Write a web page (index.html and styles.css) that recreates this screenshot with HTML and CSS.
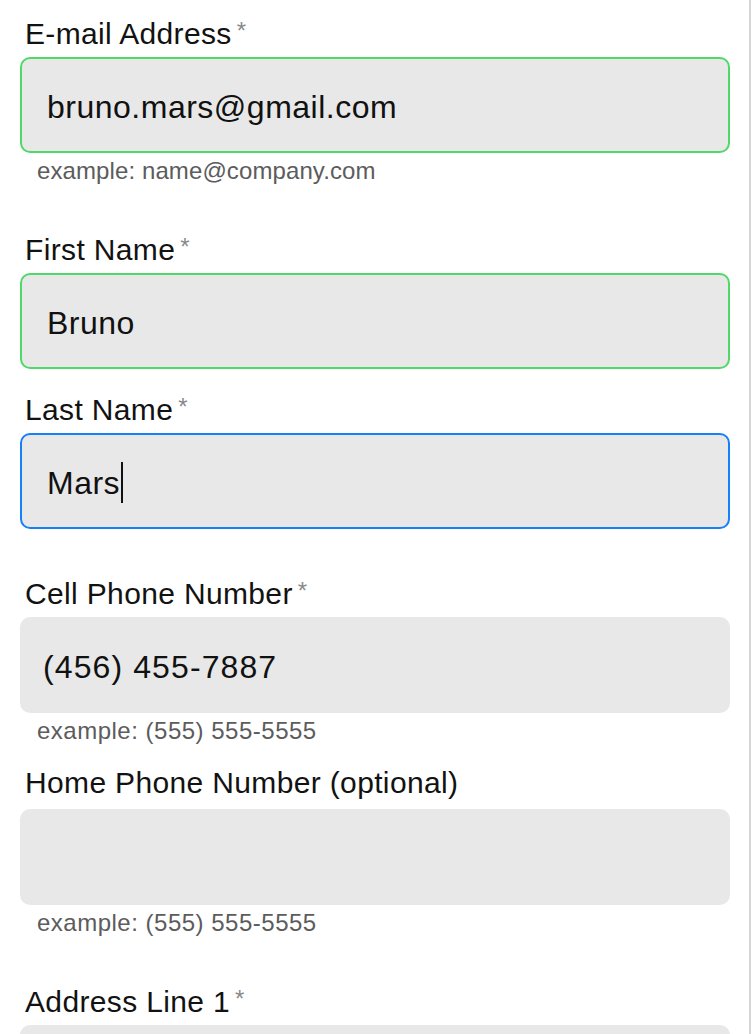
FILE: index.html
```html
<!DOCTYPE html>
<html>
<head>
<meta charset="utf-8">
<link rel="stylesheet" href="styles.css">
</head>
<body>
<div class="page">
  <form class="form">
    <div class="field gap-hint">
      <div class="label">E-mail Address<span class="req">*</span></div>
      <div class="input valid"><span class="value">bruno.mars@gmail.com</span></div>
      <div class="hint">example: name@company.com</div>
    </div>
    <div class="field gap-plain">
      <div class="label">First Name<span class="req">*</span></div>
      <div class="input valid"><span class="value">Bruno</span></div>
    </div>
    <div class="field gap-wide">
      <div class="label">Last Name<span class="req">*</span></div>
      <div class="input focus"><span class="value">Mars</span><span class="caret"></span></div>
    </div>
    <div class="field gap-tight">
      <div class="label">Cell Phone Number<span class="req">*</span></div>
      <div class="input plain"><span class="value numeric">(456) 455-7887</span></div>
      <div class="hint numeric">example: (555) 555-5555</div>
    </div>
    <div class="field gap-hint">
      <div class="label">Home Phone Number (optional)</div>
      <div class="input plain"><span class="value"></span></div>
      <div class="hint numeric">example: (555) 555-5555</div>
    </div>
    <div class="field">
      <div class="label">Address Line 1<span class="req">*</span></div>
      <div class="input plain"><span class="value"></span></div>
    </div>
  </form>
</div>
</body>
</html>
```
FILE: styles.css
```css
html, body {
  margin: 0;
  padding: 0;
  background: #ffffff;
  overflow: hidden;
}

body {
  font-family: "Liberation Sans", Arial, sans-serif;
  color: #111111;
}

.page {
  width: 749px;
  height: 1034px;
  border-right: 2px solid #d6d6d6;
  box-sizing: content-box;
  overflow: hidden;
}

.form {
  padding: 15px 19px 0 20px;
  display: flex;
  flex-direction: column;
}

.field {
  display: flex;
  flex-direction: column;
}

.gap-hint { margin-bottom: 42px; }
.gap-plain { margin-bottom: 22px; }
.gap-wide { margin-bottom: 46px; }
.gap-tight { margin-bottom: 18px; }

.label {
  font-size: 30px;
  line-height: 32px;
  height: 32px;
  margin: 0 0 10px 5px;
  letter-spacing: 0.35px;
  color: #121212;
  white-space: nowrap;
}

.req {
  font-size: 24px;
  color: #8a8a8a;
  margin-left: 5px;
  vertical-align: 5px;
  letter-spacing: 0;
}

.input {
  height: 96px;
  box-sizing: border-box;
  background: #e8e8e8;
  border-radius: 10px;
  border: 2px solid transparent;
  padding: 4px 0 0 25px;
  display: flex;
  align-items: center;
}

.input.valid { border-color: #4fd968; }
.input.focus { border-color: #1680fa; }
.input.plain {
  border: 0;
  padding-left: 23px;
}

.value {
  font-size: 32px;
  letter-spacing: 0.5px;
  color: #111111;
  white-space: nowrap;
}

.value.numeric { letter-spacing: 1.1px; }

.caret {
  display: inline-block;
  width: 2px;
  height: 41px;
  background: #111111;
  margin-left: 1px;
  margin-top: -2px;
}

.hint {
  font-size: 24px;
  line-height: 36px;
  height: 36px;
  margin-left: 17px;
  color: #5c5c5c;
  letter-spacing: 0.1px;
  white-space: nowrap;
}

.hint.numeric { letter-spacing: 0.5px; }
```
